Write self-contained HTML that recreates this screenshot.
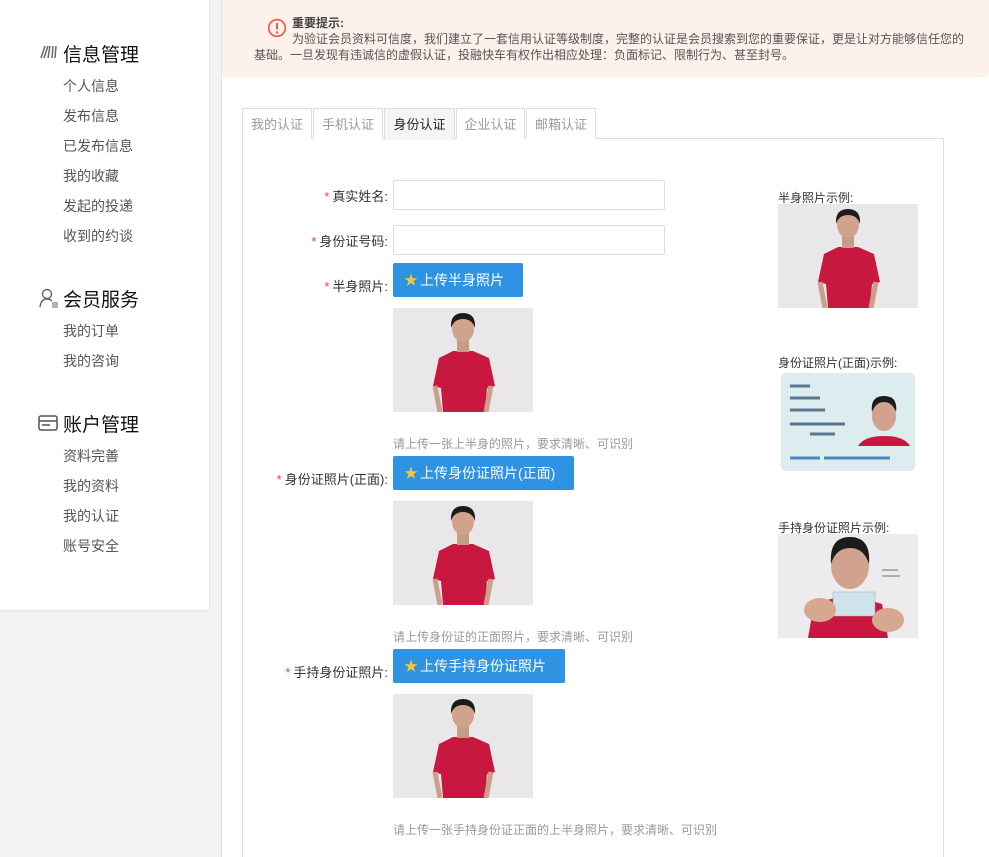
<!DOCTYPE html>
<html style="width:989px;height:857px;overflow:hidden"><head><meta charset="utf-8">
<style>
*{margin:0;padding:0;box-sizing:border-box}
body{width:989px;height:857px;overflow:hidden;background:#f3f3f3;font-family:"Liberation Sans","Noto Sans CJK SC",sans-serif;position:relative;color:#333}
.a{position:absolute}
#side{left:0;top:0;width:210px;height:611px;background:#fff;border-right:1px solid #e6e6e6;border-bottom:1px solid #e6e6e6}
.h{font-size:19px;color:#111;left:63px}
.it{font-size:14px;color:#555;left:63px}
#main{left:221px;top:0;width:768px;height:857px;background:#fff;border-left:1px solid #e4e4e4}
#note{left:222px;top:0;width:767px;height:77px;background:#fdf1ec;border-radius:0 0 4px 4px;font-size:12px;color:#555;line-height:16px}
.tab{top:108px;height:31px;border:1px solid #ddd;border-bottom:none;font-size:13px;color:#999;text-align:center;line-height:31px;background:#fff}
#panel{left:242px;top:138px;width:702px;height:719px;border:1px solid #ddd;border-bottom:none}
.lb{font-size:13px;color:#333;text-align:right;width:200px;left:188px}
.lb i{color:#e8492c;font-style:normal;margin-right:3px}
.inp{left:393px;width:272px;height:30px;border:1px solid #ddd;border-radius:2px;background:#fff}
.btn{left:393px;height:34px;background:#2d93e2;color:#fff;font-size:14px;line-height:34px;padding-left:11px;border-radius:2px}
.btn b{color:#f5c53a;font-weight:normal;margin-right:2px}
.hint{left:393px;font-size:12px;color:#999}
.rl{left:778px;font-size:12px;color:#333}
</style></head><body>
<svg width="0" height="0" style="position:absolute">
<defs>
<symbol id="ph" viewBox="0 0 140 104">
<rect width="140" height="104" fill="#eae7ea"/>
<path d="M50 104 L48 80 L40 78 L46 50 L60 43 L80 43 L96 50 L102 78 L94 80 L92 104Z" fill="#c9183f"/>
<rect x="64" y="32" width="12" height="12" fill="#c99a86"/>
<ellipse cx="70" cy="21" rx="11" ry="13" fill="#d1a38e"/>
<path d="M58 20 Q57 5 70 5 Q83 5 82 20 Q79 11 70 11 Q61 11 58 20Z" fill="#1c1c1c"/>
<path d="M42 78 L47 104 M98 78 L93 104" stroke="#caa08b" stroke-width="5"/>
</symbol>
</defs></svg>

<div id="side" class="a">
<svg class="a" style="left:40px;top:45px" width="18" height="14" viewBox="0 0 18 14"><path d="M1 13 L5 1 M4 13 L8 1 M8 13 L10 1 M12 13 L13 1 M15 13 L16 1" stroke="#666" stroke-width="1.5" fill="none"/></svg>
<div class="a h" style="top:40px">信息管理</div>
<div class="a it" style="top:76px">个人信息</div>
<div class="a it" style="top:106px">发布信息</div>
<div class="a it" style="top:136px">已发布信息</div>
<div class="a it" style="top:166px">我的收藏</div>
<div class="a it" style="top:196px">发起的投递</div>
<div class="a it" style="top:226px">收到的约谈</div>
<svg class="a" style="left:39px;top:288px" width="20" height="20" viewBox="0 0 20 20"><circle cx="8" cy="6" r="4.5" stroke="#666" stroke-width="1.4" fill="none"/><path d="M1 19 Q2 11 8 11 Q11 11 13 13" stroke="#666" stroke-width="1.4" fill="none"/><path d="M13 15 H19 M13 17 H19 M13 19 H19" stroke="#666" stroke-width="1"/></svg>
<div class="a h" style="top:285px">会员服务</div>
<div class="a it" style="top:321px">我的订单</div>
<div class="a it" style="top:351px">我的咨询</div>
<svg class="a" style="left:38px;top:415px" width="20" height="16" viewBox="0 0 20 16"><rect x="1" y="1" width="18" height="14" rx="2" stroke="#555" stroke-width="1.5" fill="none"/><path d="M1 6 H19 M4 10 H12" stroke="#555" stroke-width="1.5"/></svg>
<div class="a h" style="top:410px">账户管理</div>
<div class="a it" style="top:446px">资料完善</div>
<div class="a it" style="top:476px">我的资料</div>
<div class="a it" style="top:506px">我的认证</div>
<div class="a it" style="top:536px">账号安全</div>
</div>

<div id="main" class="a"></div>
<div id="note" class="a">
<svg class="a" style="left:45px;top:18px" width="20" height="20" viewBox="0 0 20 20"><circle cx="10" cy="10" r="8.3" stroke="#ee5b48" stroke-width="1.7" fill="none"/><path d="M10 5 V11.5" stroke="#ee5b48" stroke-width="2"/><circle cx="10" cy="14.5" r="1.2" fill="#ee5b48"/></svg>
<div class="a" style="left:70px;top:15px;font-weight:bold;color:#444">重要提示:</div>
<div class="a" style="left:32px;top:31px;width:720px;text-indent:38px">为验证会员资料可信度，我们建立了一套信用认证等级制度，完整的认证是会员搜索到您的重要保证，更是让对方能够信任您的基础。一旦发现有违诚信的虚假认证，投融快车有权作出相应处理：负面标记、限制行为、甚至封号。</div>
</div>

<div id="panel" class="a"></div>
<div class="a tab" style="left:242px;width:70px">我的认证</div>
<div class="a tab" style="left:313px;width:70px">手机认证</div>
<div class="a tab" style="left:384px;width:71px;background:#f5f5f5;color:#222;height:32px">身份认证</div>
<div class="a tab" style="left:456px;width:69px">企业认证</div>
<div class="a tab" style="left:526px;width:70px">邮箱认证</div>

<div class="a lb" style="top:186px"><i>*</i>真实姓名:</div>
<div class="a inp" style="top:180px"></div>
<div class="a lb" style="top:231px"><i>*</i>身份证号码:</div>
<div class="a inp" style="top:225px"></div>
<div class="a lb" style="top:276px"><i>*</i>半身照片:</div>
<div class="a btn" style="top:263px;width:130px"><b>★</b>上传半身照片</div>
<svg class="a" style="left:393px;top:308px" width="140" height="104"><use href="#ph"/></svg>
<div class="a hint" style="top:435px">请上传一张上半身的照片，要求清晰、可识别</div>

<div class="a lb" style="top:469px"><i>*</i>身份证照片(正面):</div>
<div class="a btn" style="top:456px;width:181px"><b>★</b>上传身份证照片(正面)</div>
<svg class="a" style="left:393px;top:501px" width="140" height="104"><use href="#ph"/></svg>
<div class="a hint" style="top:628px">请上传身份证的正面照片，要求清晰、可识别</div>

<div class="a lb" style="top:662px"><i>*</i>手持身份证照片:</div>
<div class="a btn" style="top:649px;width:172px"><b>★</b>上传手持身份证照片</div>
<svg class="a" style="left:393px;top:694px" width="140" height="104"><use href="#ph"/></svg>
<div class="a hint" style="top:821px">请上传一张手持身份证正面的上半身照片，要求清晰、可识别</div>

<div class="a rl" style="top:189px">半身照片示例:</div>
<svg class="a" style="left:778px;top:204px" width="140" height="104"><use href="#ph"/></svg>
<div class="a rl" style="top:354px">身份证照片(正面)示例:</div>
<svg class="a" style="left:780px;top:372px" width="136" height="100" viewBox="0 0 136 100">
<rect x="1" y="1" width="134" height="98" rx="5" fill="#dcecef"/>
<path d="M10 14 H30 M10 26 H40 M10 38 H45 M10 52 H65 M30 62 H55" stroke="#5a7690" stroke-width="3"/>
<path d="M10 86 H110" stroke="#4a88c0" stroke-width="3" stroke-dasharray="30 4 70"/>
<path d="M78 74 Q84 64 104 64 Q124 64 130 74Z" fill="#c9183f"/>
<ellipse cx="104" cy="44" rx="12" ry="15" fill="#d1a38e"/>
<path d="M92 40 Q90 24 104 24 Q118 24 116 40 Q112 30 104 30 Q96 30 92 40Z" fill="#1c1c1c"/>
</svg>
<div class="a rl" style="top:519px">手持身份证照片示例:</div>
<svg class="a" style="left:778px;top:534px" width="140" height="104" viewBox="0 0 140 104">
<rect width="140" height="104" fill="#ecebee"/>
<path d="M30 104 L36 70 L70 60 L104 70 L110 104Z" fill="#c9183f"/>
<ellipse cx="72" cy="32" rx="19" ry="23" fill="#d1a38e"/>
<path d="M53 30 Q51 3 72 3 Q93 3 91 30 Q86 14 72 14 Q58 14 53 30Z" fill="#1c1c1c"/>
<rect x="55" y="58" width="42" height="24" fill="#cfe3ea" stroke="#aaa" stroke-width=".5"/>
<ellipse cx="42" cy="76" rx="16" ry="12" fill="#d7a790"/>
<ellipse cx="110" cy="86" rx="16" ry="12" fill="#d7a790"/>
<path d="M104 36 H120 M104 42 H122" stroke="#444" stroke-width="0.8"/>
</svg>
</body></html>
